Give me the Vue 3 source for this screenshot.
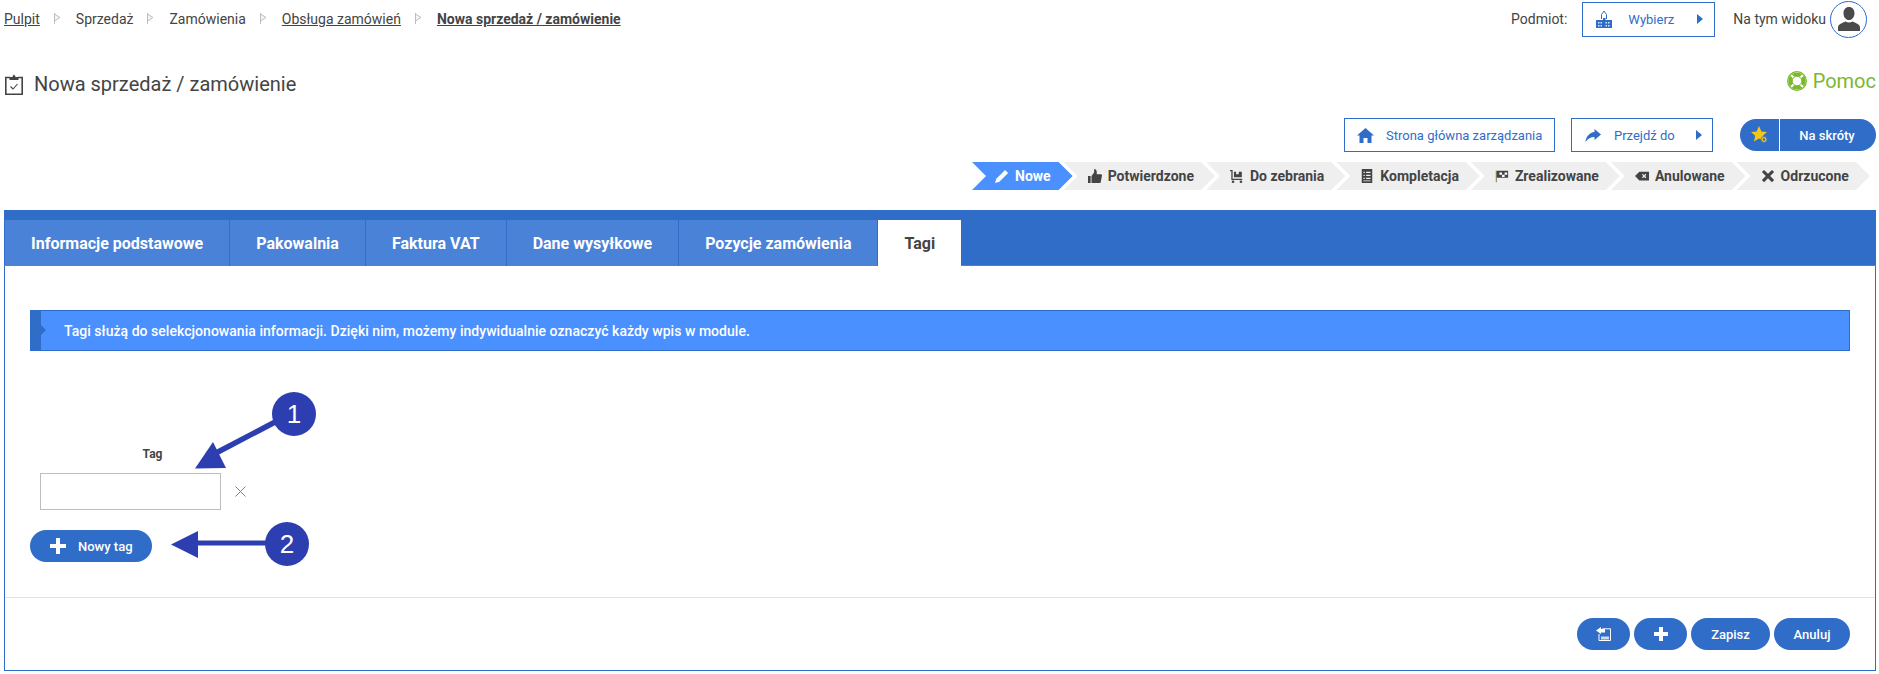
<script setup>
const crumbs = [
  { t: 'Pulpit', link: true },
  { t: 'Sprzedaż' },
  { t: 'Zamówienia' },
  { t: 'Obsługa zamówień', link: true },
  { t: 'Nowa sprzedaż / zamówienie', link: true, strong: true }
]
const steps = [
  { t: 'Nowe', i: 'pencil', active: true },
  { t: 'Potwierdzone', i: 'thumb' },
  { t: 'Do zebrania', i: 'cart' },
  { t: 'Kompletacja', i: 'list' },
  { t: 'Zrealizowane', i: 'flag' },
  { t: 'Anulowane', i: 'back' },
  { t: 'Odrzucone', i: 'cross' }
]
const tabs = ['Informacje podstawowe', 'Pakowalnia', 'Faktura VAT', 'Dane wysyłkowe', 'Pozycje zamówienia', 'Tagi']
</script>

<template>
  <div class="page">
    <header class="topbar">
      <nav class="crumbs">
        <template v-for="(c, n) in crumbs" :key="c.t">
          <span class="crumb" :class="{ link: c.link, strong: c.strong }">{{ c.t }}</span>
          <span v-if="n < crumbs.length - 1" class="sep">
            <svg width="7" height="11" viewBox="0 0 7 11"><path d="M.5 0v11M.5 1l5.500 3.500L.5 8" fill="#f4f4f4" stroke="#bdbdbd" stroke-width="1"/></svg>
          </span>
        </template>
      </nav>
      <div class="top-right">
        <span class="plain">Podmiot:</span>
        <button class="outline wybierz">
          <svg width="16" height="18" viewBox="0 0 16 18">
            <path d="M5.500 9V4.500L8 1l2.500 3.500V9" fill="none" stroke="#2f6dc9" stroke-width="1"/>
            <path d="M0 10h7V8h2.500v2H16v8H0z" fill="#2f6dc9"/>
            <path d="M2 12h1.500v1.500H2zM4.500 12H6v1.500H4.500zM2 15h1.500v1.500H2zM4.500 15H6v1.500H4.500zM9.500 12H11v1.500H9.500zM12 12h1.500v1.500H12zM9.500 15H11v1.500H9.500zM12 15h1.500v1.500H12z" fill="#dbe7f8"/>
          </svg>
          <span>Wybierz</span>
          <i class="caret"></i>
        </button>
        <span class="plain viewing">Na tym widoku</span>
        <span class="avatar">
          <svg width="22" height="24" viewBox="0 0 22 24"><path d="M11 0c3.300 0 5.500 2.600 5.500 6.200S14.300 13 11 13 5.500 9.800 5.500 6.200 7.700 0 11 0zM0 24v-3.500c0-3.500 4.500-4.500 7.500-6 2 1.300 5 1.300 7 0 3 1.500 7.500 2.500 7.500 6V24z" fill="#4a4a4a"/></svg>
        </span>
      </div>
    </header>

    <section class="title-row">
      <div class="title">
        <svg width="18" height="21" viewBox="0 0 18 21">
          <path d="M5 3.500H.8v16.700h16.400V3.500H13" fill="none" stroke="#444" stroke-width="1.600"/>
          <path d="M4.500 6V3h2.800L9 .2 10.700 3h2.800v3z" fill="#444"/>
          <path d="M5.500 12.500l2.500 2.500 4.500-5" fill="none" stroke="#444" stroke-width="1.100"/>
        </svg>
        <h1>Nowa sprzedaż / zamówienie</h1>
      </div>
      <div class="help">
        <svg width="20" height="20" viewBox="0 0 20 20">
          <circle cx="10" cy="10" r="6.800" fill="none" stroke="#7cb82f" stroke-width="3.600"/>
          <path d="M3 3l4.300 4.300M17 3l-4.300 4.300M3 17l4.300-4.300M17 17l-4.300-4.300" stroke="#fff" stroke-width="2"/>
          <circle cx="10" cy="10" r="9.300" fill="none" stroke="#7cb82f" stroke-width="1.300"/>
          <circle cx="10" cy="10" r="4.800" fill="none" stroke="#7cb82f" stroke-width="1"/>
        </svg>
        <span>Pomoc</span>
      </div>
    </section>

    <section class="actions">
      <button class="outline home">
        <svg width="17" height="15" viewBox="0 0 17 15"><path d="M8.500 0L17 7.500h-2.500V15H10.500v-5h-4v5H2.500V7.500H0z" fill="#2f6dc9"/></svg>
        <span>Strona główna zarządzania</span>
      </button>
      <button class="outline goto">
        <svg width="16" height="13" viewBox="0 0 16 13"><path d="M9.500 0L16 5.500 9.500 11V8C5.500 8 3 9.500 .5 13 1 7.500 4.500 3.500 9.500 3z" fill="#2f6dc9"/></svg>
        <span>Przejdź do</span>
        <i class="caret"></i>
      </button>
      <div class="shortcut">
        <span class="star">
          <svg width="18" height="18" viewBox="0 0 18 18">
            <path d="M8 0l2.400 5.400 5.600.6-4.200 3.800L13 15.500 8 12.500 3 15.500l1.200-5.700L0 6l5.600-.6z" fill="#f5c518"/>
            <circle cx="13" cy="13.500" r="3" fill="#f5c518" stroke="#2f6dc9" stroke-width=".8"/>
            <circle cx="13" cy="13.500" r="1.200" fill="#2f6dc9"/>
          </svg>
        </span>
        <span class="short-label">Na skróty</span>
      </div>
    </section>

    <section class="steps">
      <div v-for="s in steps" :key="s.t" class="step" :class="{ active: s.active }">
        <svg class="step-ic" width="14" height="14" viewBox="0 0 16 16">
          <path v-if="s.i === 'pencil'" d="M11.500 1l3.500 3.500L5 14.500 0 16l1.500-5z" fill="#fff"/>
          <path v-else-if="s.i === 'thumb'" d="M0 8h3v8H0zM4 8l3-4V0c2 0 3 1.500 3 3.500V6h5c1 0 1 1 1 1.500L14.500 15c-.2.700-.6 1-1.500 1H4z" fill="#444"/>
          <g v-else-if="s.i === 'cart'" fill="#444">
            <path d="M0 1h3v10h11v1.500H1.500V2.500H0z"/>
            <path d="M4.500 3h2.500v3h3V3h3.500v6.500h-9z"/>
            <circle cx="3.500" cy="14.500" r="1.500"/><circle cx="12.500" cy="14.500" r="1.500"/>
          </g>
          <path v-else-if="s.i === 'list'" fill-rule="evenodd" d="M2 0h12v16H2zM4 3v1.500h1.500V3zM7 3v1.500h5V3zM4 6.500V8h1.500V6.500zM7 6.500V8h5V6.500zM4 10v1.500h1.500V10zM7 10v1.500h5V10zM4 13v1h8v-1z" fill="#444"/>
          <g v-else-if="s.i === 'flag'">
            <path d="M1.500 2v13" stroke="#8a7a4a" stroke-width="1.200"/>
            <path d="M2 2h13v8H2z" fill="#444"/>
            <path d="M5 4h3v2.500H5zM11 4h3v2.500h-3zM8 6.500h3V9H8z" fill="#fff"/>
          </g>
          <path v-else-if="s.i === 'back'" fill-rule="evenodd" d="M5 3h11v10H5L0 8zM8 6.500l1-1 1.500 1.500L12 5.500l1 1L11.500 8l1.500 1.500-1 1L10.500 9 9 10.500l-1-1L9.500 8z" fill="#444"/>
          <path v-else d="M3.500 1L8 5.500 12.500 1 15 3.500 10.500 8l4.500 4.500L12.500 15 8 10.500 3.500 15 1 12.500 5.500 8 1 3.500z" fill="#444"/>
        </svg>
        <span>{{ s.t }}</span>
      </div>
    </section>

    <main class="panel">
      <div class="tabs">
        <div v-for="t in tabs" :key="t" class="tab" :class="{ current: t === 'Tagi' }">{{ t }}</div>
      </div>
      <div class="body">
        <div class="info">
          <span class="info-mark"></span>
          <span>Tagi służą do selekcjonowania informacji. Dzięki nim, możemy indywidualnie oznaczyć każdy wpis w module.</span>
        </div>
        <div class="form">
          <label class="tag-label">Tag</label>
          <div class="tag-row">
            <input class="tag-input" type="text" />
            <svg class="tag-x" width="11" height="11" viewBox="0 0 11 11"><path d="M.5.500l10 10M10.500.500l-10 10" stroke="#e0555d" stroke-width="1"/></svg>
          </div>
          <button class="pill new-tag">
            <svg width="16" height="16" viewBox="0 0 16 16"><path d="M6 0h4v6h6v4h-6v6H6v-6H0V6h6z" fill="#fff"/></svg>
            <span>Nowy tag</span>
          </button>
        </div>
        <svg class="notes" width="340" height="200" viewBox="0 0 340 200">
          <g fill="#2c3eb0">
            <path d="M277 41L216 73" stroke="#2c3eb0" stroke-width="5.500"/>
            <path d="M195 88.500L213 62l13 26z"/>
            <circle cx="294" cy="34" r="22"/>
            <path d="M198 163h70" stroke="#2c3eb0" stroke-width="5"/>
            <path d="M171 164.500L198 151v27z"/>
            <circle cx="287" cy="164" r="22"/>
          </g>
          <text x="294" y="43" class="note-n" text-anchor="middle">1</text>
          <text x="287" y="173" class="note-n" text-anchor="middle">2</text>
        </svg>
      </div>
      <footer class="foot">
        <button class="pill sq">
          <svg width="15" height="14" viewBox="0 0 15 14">
            <path d="M6.500 1.800h8v11.700H3V7" fill="none" stroke="#fff" stroke-width="1"/>
            <path d="M5 9.500h8v3H5z" fill="#c9dcf5"/>
            <path d="M0 3.500L5 0v2h4v3.500H5V7z" fill="#fff"/>
          </svg>
        </button>
        <button class="pill sq">
          <svg width="14" height="14" viewBox="0 0 14 14"><path d="M5 0h4v5h5v4H9v5H5V9H0V5h5z" fill="#fff"/></svg>
        </button>
        <button class="pill save">Zapisz</button>
        <button class="pill cancel">Anuluj</button>
      </footer>
    </main>
  </div>
</template>

<style>
html, body { margin: 0; padding: 0; background: #fff; overflow: hidden; }
</style>

<style scoped>
.page {
  width: 1879px;
  height: 674px;
  font-family: Roboto, "Liberation Sans", sans-serif;
  font-size: 14px;
  color: #444;
  box-sizing: border-box;
}
button { font-family: inherit; cursor: pointer; }

.topbar {
  height: 38px;
  display: flex;
  align-items: center;
  justify-content: space-between;
  padding: 0 12px 0 4px;
}
.crumbs { display: flex; align-items: center; }
.crumb { white-space: nowrap; }
.crumb.link { text-decoration: underline; }
.crumb.strong { font-weight: 700; }
.sep { width: 36px; display: flex; justify-content: center; padding-right: 1px; box-sizing: border-box; margin-top: -2px; }
.top-right { display: flex; align-items: center; }
.plain { white-space: nowrap; }

.outline {
  height: 35px;
  box-sizing: border-box;
  display: flex;
  align-items: center;
  background: #fff;
  border: 1px solid #2f6dc9;
  color: #2f6dc9;
  font-size: 13px;
  white-space: nowrap;
  padding: 0;
}
.caret {
  display: block;
  width: 0;
  height: 0;
  border-left: 6px solid #2f6dc9;
  border-top: 5px solid transparent;
  border-bottom: 5px solid transparent;
}
.wybierz { width: 133px; margin-left: 15px; padding-left: 13px; }
.wybierz span { margin-left: 16px; }
.wybierz .caret { margin-left: 23px; }
.viewing { margin-left: 18px; }
.avatar {
  width: 37px;
  height: 37px;
  margin-left: 4px;
  box-sizing: border-box;
  border: 1px solid #2f6dc9;
  border-radius: 50%;
  display: flex;
  align-items: center;
  justify-content: center;
}

.title-row {
  height: 32px;
  margin-top: 30px;
  display: flex;
  align-items: center;
  justify-content: space-between;
  padding: 0 3px 0 5px;
}
.title { display: flex; align-items: center; }
.title h1 { margin: 0 0 0 11px; font-size: 20px; font-weight: 400; color: #444; }
.help { display: flex; align-items: center; color: #7cb82f; font-size: 20px; margin-top: -6px; }
.help span { margin-left: 6px; }

.actions {
  height: 34px;
  margin-top: 18px;
  display: flex;
  align-items: center;
  justify-content: flex-end;
  padding-right: 3px;
}
.home { width: 211px; height: 34px; padding-left: 12px; }
.home span { margin-left: 12px; }
.goto { width: 142px; height: 34px; margin-left: 16px; padding-left: 13px; }
.goto span { margin-left: 13px; }
.goto .caret { margin-left: 21px; }
.shortcut {
  width: 136px;
  height: 32px;
  margin-left: 27px;
  display: flex;
  border-radius: 16px;
  background: #2f6dc9;
  color: #fff;
  font-size: 13px;
  font-weight: 500;
}
.star {
  width: 40px;
  display: flex;
  align-items: center;
  justify-content: flex-end;
  padding-right: 10px;
  box-sizing: border-box;
  border-right: 1px solid #fff;
}
.short-label { flex: 1; display: flex; align-items: center; justify-content: center; padding-right: 2px; }

.steps {
  height: 28px;
  margin-top: 10px;
  display: flex;
  padding-left: 972px;
}
.step {
  height: 28px;
  box-sizing: border-box;
  display: flex;
  align-items: center;
  white-space: nowrap;
  background: #efefef;
  font-weight: 700;
  color: #444;
  padding: 0 21px 0 24px;
  margin-left: -9px;
  clip-path: polygon(0 0, calc(100% - 14px) 0, 100% 50%, calc(100% - 14px) 100%, 0 100%, 14px 50%);
}
.step:first-child { margin-left: 0; }
.step.active { background: #4a90ff; color: #fff; padding: 0 22px 0 23px; }
.step-ic { margin-right: 6px; flex: none; }

.panel {
  height: 461px;
  margin: 20px 3px 0 4px;
  box-sizing: border-box;
  border: 1px solid #2f6dc9;
  border-top: 0;
  display: flex;
  flex-direction: column;
}
.tabs {
  height: 56px;
  margin: 0 -1px;
  box-sizing: border-box;
  padding: 10px 0 0 1px;
  background: #2f6dc9;
  border-bottom: 1px solid #4a82d8;
  display: flex;
  flex: none;
}
.tab {
  padding: 0 26px;
  margin-bottom: -1px;
  display: flex;
  align-items: center;
  background: #4a82d8;
  color: #fff;
  font-size: 16px;
  font-weight: 700;
  border-right: 1px solid #2f6dc9;
  white-space: nowrap;
}
.tab.current { background: #fff; color: #444; border-right: 0; }

.body { position: relative; flex: 1; padding: 44px 25px 0; }
.info {
  height: 41px;
  box-sizing: border-box;
  background: #4a90ff;
  border: 1px solid #2f6dc9;
  border-left: 0;
  color: #fff;
  font-size: 14px;
  font-weight: 500;
  letter-spacing: .035px;
  display: flex;
  align-items: center;
  position: relative;
  padding-left: 34px;
}
.info-mark {
  position: absolute;
  left: 0;
  top: -1px;
  bottom: -1px;
  width: 11px;
  background: #2f6dc9;
}
.info-mark::after {
  content: "";
  position: absolute;
  left: 11px;
  top: 15px;
  border-left: 5px solid #2f6dc9;
  border-top: 5px solid transparent;
  border-bottom: 5px solid transparent;
}
.form { padding: 95px 0 0 0; display: flex; flex-direction: column; align-items: flex-start; }
.tag-label {
  width: 225px;
  margin-left: 10px;
  text-align: center;
  font-size: 12px;
  font-weight: 700;
  line-height: 16px;
}
.tag-row { display: flex; align-items: center; margin: 11px 0 0 10px; }
.tag-input {
  width: 181px;
  height: 37px;
  box-sizing: border-box;
  background: #fff;
  border: 1px solid #bdbdbd;
  outline: 0;
  padding: 0;
}
.tag-x { margin-left: 14px; }
.pill {
  height: 32px;
  border: 0;
  border-radius: 16px;
  background: #2f6dc9;
  color: #fff;
  font-size: 13px;
  font-weight: 500;
  display: flex;
  align-items: center;
  justify-content: center;
  padding: 0;
}
.new-tag { width: 122px; margin-top: 20px; justify-content: flex-start; padding-left: 20px; }
.new-tag span { margin-left: 12px; }
.notes { position: absolute; left: -5px; top: 114px; pointer-events: none; }
.note-n { font-family: "Liberation Sans", Arial, sans-serif; font-size: 26px; fill: #fff; }

.foot {
  flex: none;
  height: 73px;
  box-sizing: border-box;
  border-top: 1px solid #e3e3e3;
  padding: 20px 25px 0 0;
  display: flex;
  justify-content: flex-end;
  gap: 4px;
}
.sq { width: 53px; }
.save { width: 79px; }
.cancel { width: 76px; }
</style>
